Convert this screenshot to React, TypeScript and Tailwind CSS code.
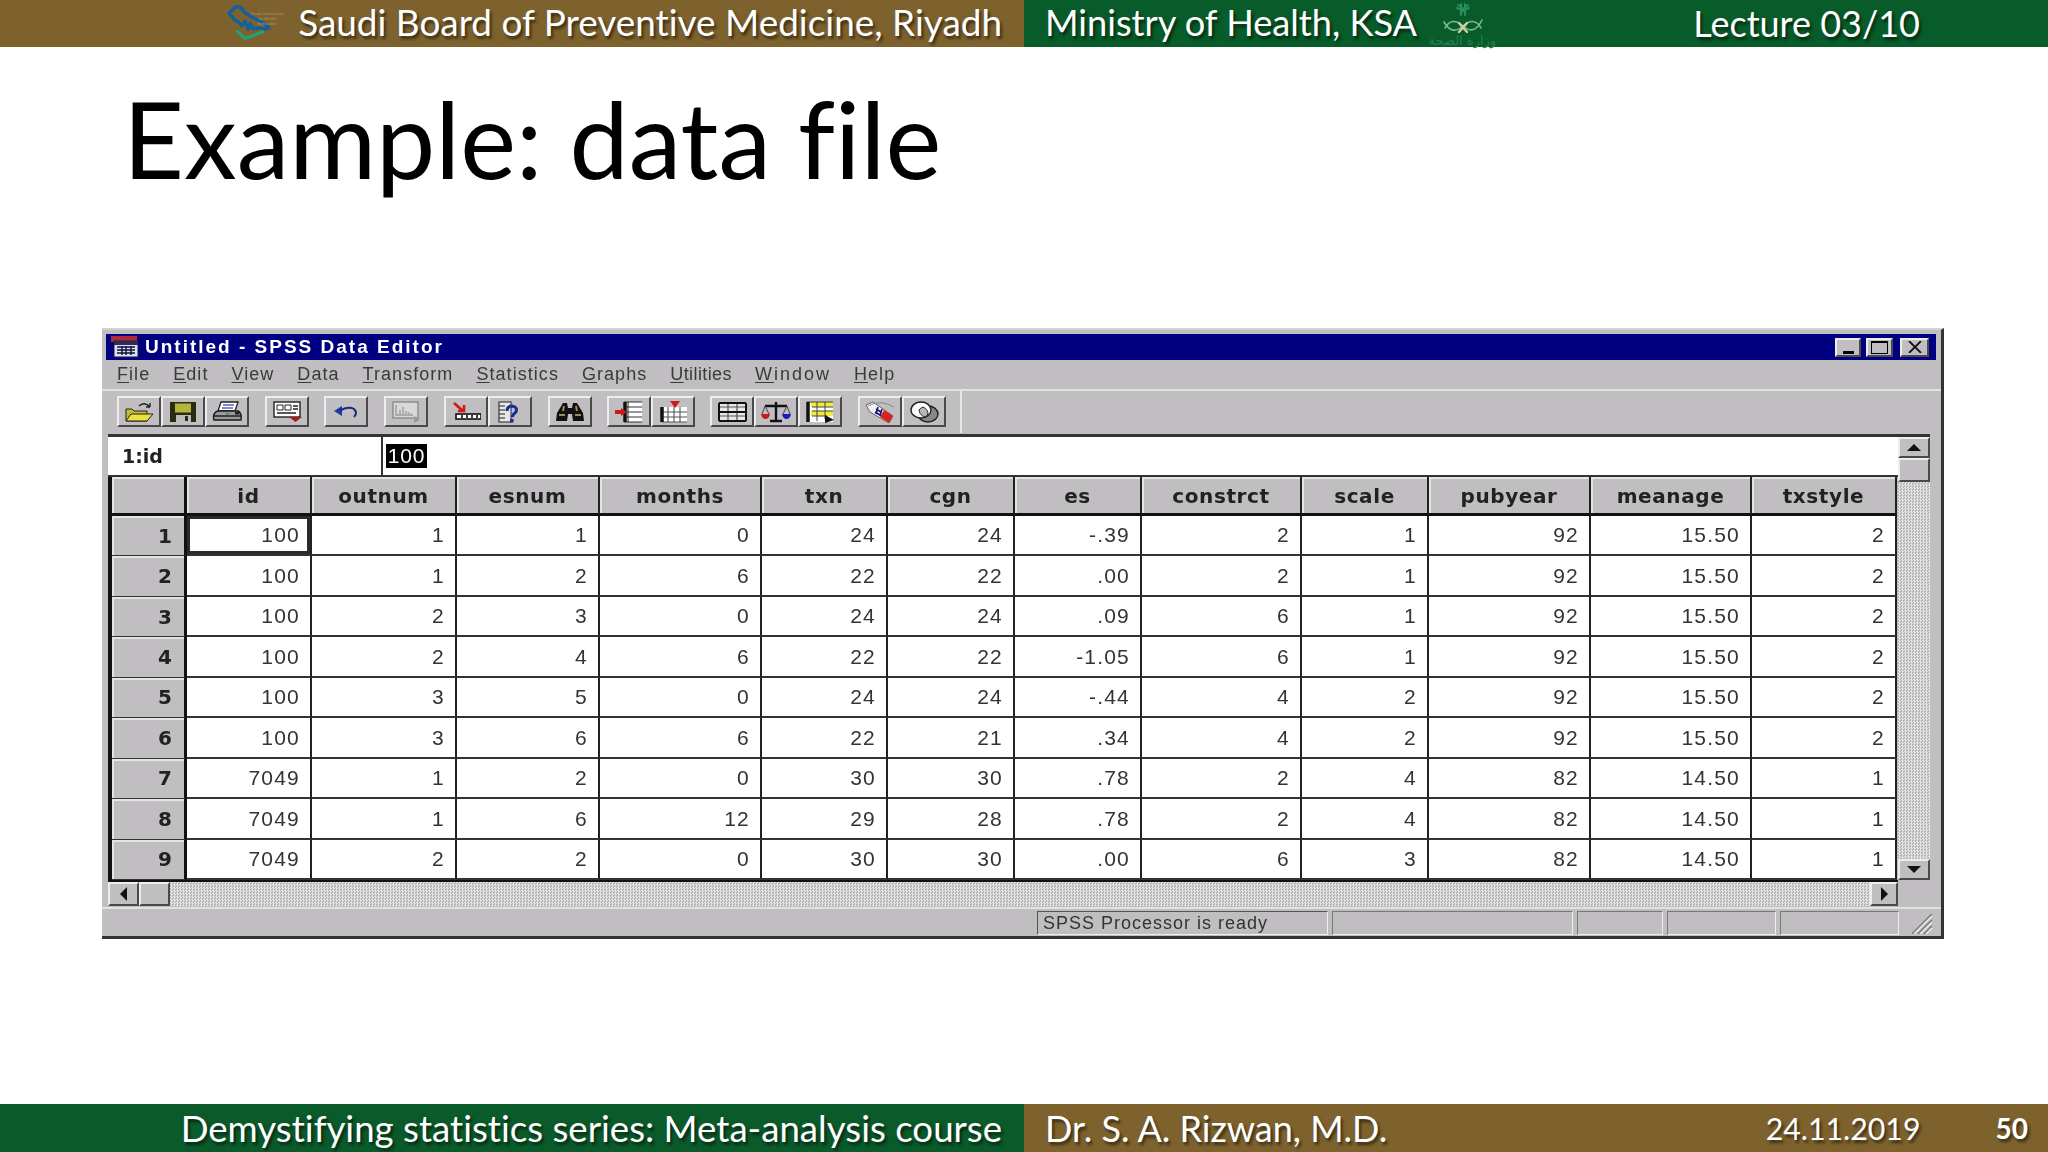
const raised = 'border-2 border-t-[#ededed] border-l-[#ededed] border-r-[#4a4a4a] border-b-[#4a4a4a] bg-[#c0bec1]';
const dither = 'bg-[repeating-conic-gradient(#e4e4e4_0%_25%,#b4b4b4_0%_50%)] bg-[length:3px_3px]';
const barText = "font-['Lato',sans-serif] leading-none text-white [font-variant-ligatures:none] [text-shadow:2px_3px_3px_rgba(0,0,0,0.55)] whitespace-nowrap";

const columns = ['id', 'outnum', 'esnum', 'months', 'txn', 'cgn', 'es', 'constrct', 'scale', 'pubyear', 'meanage', 'txstyle'];

const rows = [
  ['100', '1', '1', '0', '24', '24', '-.39', '2', '1', '92', '15.50', '2'],
  ['100', '1', '2', '6', '22', '22', '.00', '2', '1', '92', '15.50', '2'],
  ['100', '2', '3', '0', '24', '24', '.09', '6', '1', '92', '15.50', '2'],
  ['100', '2', '4', '6', '22', '22', '-1.05', '6', '1', '92', '15.50', '2'],
  ['100', '3', '5', '0', '24', '24', '-.44', '4', '2', '92', '15.50', '2'],
  ['100', '3', '6', '6', '22', '21', '.34', '4', '2', '92', '15.50', '2'],
  ['7049', '1', '2', '0', '30', '30', '.78', '2', '4', '82', '14.50', '1'],
  ['7049', '1', '6', '12', '29', '28', '.78', '2', '4', '82', '14.50', '1'],
  ['7049', '2', '2', '0', '30', '30', '.00', '6', '3', '82', '14.50', '1'],
];

const menus = [
  { label: 'File', tracking: '' },
  { label: 'Edit', tracking: '' },
  { label: 'View', tracking: '' },
  { label: 'Data', tracking: '' },
  { label: 'Transform', tracking: '' },
  { label: 'Statistics', tracking: '' },
  { label: 'Graphs', tracking: '' },
  { label: 'Utilities', tracking: 'tracking-[0.4px]' },
  { label: 'Window', tracking: 'tracking-[2px]' },
  { label: 'Help', tracking: '' },
];

function BoardLogo() {
  return (
    <div className="relative h-[37px] w-[47px] shrink-0">
      <svg viewBox="80 20 140 112" className="h-[37px] w-[47px]" fill="none" strokeLinecap="round" strokeLinejoin="round">
        <path d="M88 47 L108 29 Q125 25 135 46 Q150 56 170 66 Q200 80 209 92 Q200 100 180 92 L160 95 L152 78 L146 96 L136 72 L126 86 L118 76 L105 68 Z" stroke="#12609f" strokeWidth="10" />
        <path d="M114 103 L136 125 L190 104" stroke="#1fa37a" strokeWidth="9" />
      </svg>
      <div className="absolute left-[23px] top-[7px] w-[36px] text-center font-['Liberation_Sans',sans-serif] text-[4px] leading-[5px] text-[#a8966f]">
        Saudi Commission
        <br />
        for Health
        <br />
        Specialties
      </div>
    </div>
  );
}

function MinistryLogo() {
  return (
    <div className="relative ml-[13px] mt-[2px] h-[47px] w-[66px] shrink-0">
      <svg viewBox="0 0 66 36" className="h-[36px] w-[66px]" fill="none" strokeLinecap="round">
        <path d="M31 4 L31 15 M35 4 L35 15 M28 5 L33 9 L38 5 M27 8 L33 11 L39 8" stroke="#26905a" strokeWidth="2" />
        <path d="M15 28 Q22 16 33 26 Q44 36 52 20 M51 28 Q44 16 33 26 Q22 36 14 22" stroke="#7fb892" strokeWidth="1.6" />
        <path d="M29 23 L37 32 M37 23 L29 32" stroke="#cfcda6" strokeWidth="2.4" />
      </svg>
      <div dir="rtl" className="absolute left-0 top-[33px] w-[66px] whitespace-nowrap text-center font-['DejaVu_Sans',sans-serif] text-[13px] leading-[16px] text-[#237f4e]">
        وزارة الصحة
      </div>
    </div>
  );
}

function TitleIcon() {
  return (
    <svg viewBox="0 0 28 22" className="h-[22px] w-[28px] shrink-0">
      <rect x="0" y="0" width="26" height="6" fill="#b02a3a" />
      <rect x="3" y="5" width="24" height="16" fill="#dfe3ea" stroke="#1a1a3a" />
      <rect x="3" y="5" width="24" height="4" fill="#2b2b5c" />
      <path d="M6 11 H24 M6 14 H24 M6 17 H24 M11 10 V19 M15 10 V19 M20 10 V19" stroke="#101040" strokeWidth="1.4" />
    </svg>
  );
}

function ToolIcon({ name }: { name: string }) {
  return (
    <svg viewBox="0 0 30 22" className="h-[22px] w-[30px]" fill="none">
      {name === 'open' && (
        <>
          <path d="M2 8 L2 20 L23 20 L23 10 L10 10 L8 8 Z" fill="#c4b93a" stroke="#222" />
          <path d="M2 20 L7 13 L29 13 L23 20 Z" fill="#eae23e" stroke="#222" />
          <path d="M15 5 Q21 0 26 6 M26 6 L26 2 M26 6 L22 6" stroke="#222" strokeWidth="1.4" />
        </>
      )}
      {name === 'save' && (
        <>
          <rect x="2" y="1" width="26" height="20" fill="#2a2c12" />
          <rect x="7" y="2.500" width="16" height="9" fill="#b4b53c" />
          <rect x="8" y="14" width="15" height="7" fill="#bdbcbd" />
          <rect x="17" y="15" width="3" height="5" fill="#2a2c12" />
        </>
      )}
      {name === 'print' && (
        <>
          <path d="M9 1 L26 1 L23 10 L6 10 Z" fill="#fff" stroke="#222" strokeWidth="1.3" />
          <path d="M11 4 H22 M10 7 H21" stroke="#5566bb" strokeWidth="1.6" />
          <path d="M6 10 L26 10 Q30 12 29 19 L2 19 Q0 12 6 10 Z" fill="#9a9a9a" stroke="#1a1a1a" strokeWidth="1.4" />
          <path d="M2 15 H29" stroke="#1a1a1a" strokeWidth="1.4" />
          <rect x="23" y="11" width="4" height="2.500" fill="#222" />
          <rect x="14" y="12" width="3" height="1.500" fill="#3a9a4a" />
        </>
      )}
      {name === 'goto' && (
        <>
          <rect x="2" y="1" width="26" height="15" fill="#fff" stroke="#222" strokeWidth="1.4" />
          <path d="M5 4 H11 V9 H5 Z M13 4 H19 V9 H13 Z" stroke="#222" />
          <path d="M21 5 H26 M21 8 H26 M5 12 H24" stroke="#222" strokeWidth="1.4" />
          <path d="M17 16 H30 L23.500 21 Z" fill="#a51c1c" />
        </>
      )}
      {name === 'undo' && (
        <>
          <path d="M3 10 L11 5 L11 15 Z" fill="#1a3c9c" />
          <path d="M10 9 Q18 5 23 8 Q27 12 23 16" stroke="#1a2a7c" strokeWidth="2" />
        </>
      )}
      {name === 'chart' && (
        <>
          <rect x="2" y="1" width="25" height="16" fill="#d8d8d8" stroke="#8c8c8c" strokeWidth="1.4" />
          <path d="M5 4 V14 H22 M9 13 V9 M12 13 V6 M15 13 V10 M18 13 V11" stroke="#9a9a9a" strokeWidth="1.3" />
          <path d="M23 15 L29 19 L23 22 Z" fill="#9a9a9a" />
        </>
      )}
      {name === 'var' && (
        <>
          <path d="M3 2 L12 10 M7 10 L13 10 L13 4" stroke="#d01818" strokeWidth="2.6" />
          <rect x="5" y="13" width="25" height="5" fill="#fff" stroke="#111" strokeWidth="1.6" />
          <path d="M11 14 V17 M16 14 V17 M21 14 V17 M26 14 V17" stroke="#111" strokeWidth="1.6" />
        </>
      )}
      {name === 'help' && (
        <>
          <rect x="4" y="1" width="12" height="20" fill="#e6e6e6" stroke="#222" />
          <path d="M4 5 H10 M4 9 H10 M4 13 H10 M4 17 H10" stroke="#222" />
          <path d="M12 10 Q12 5 17 5 Q23 6 21 11 Q18 13 17 16" stroke="#1a2a9c" strokeWidth="3" />
          <rect x="15" y="18" width="3.500" height="3.500" fill="#1a2a9c" />
        </>
      )}
      {name === 'find' && (
        <>
          <path d="M8 2 L12 2 L13 7 L17 7 L18 2 L22 2 L28 12 L29 20 L18 20 L17 13 L13 13 L12 20 L1 20 L2 12 Z" fill="#111" />
          <path d="M4 14 L10 14 M20 14 L26 14 M9 5 L8 10 M21 5 L22 10" stroke="#a08c58" strokeWidth="2" />
        </>
      )}
      {name === 'insertCase' && (
        <>
          <path d="M10 1 H28 V21 H10 Z" fill="#fff" />
          <path d="M14 1 V21 M10 1 H28 M10 6 H28 M10 11 H28 M10 16 H28 M10 21 H28" stroke="#333" strokeWidth="1.1" />
          <path d="M11 1 V21" stroke="#111" strokeWidth="3.500" />
          <path d="M1 9 H7 V7 L13 11 L7 15 V13 H1 Z" fill="#d01818" />
        </>
      )}
      {name === 'insertVar' && (
        <>
          <path d="M4 6 H29 V21 H4 Z" fill="#fff" />
          <path d="M4 6 V21 M10 6 V21 M16 6 V21 M22 6 V21 M4 11 H29 M4 16 H29 M4 21 H29" stroke="#555" strokeWidth="1.1" />
          <path d="M4 6 V21" stroke="#111" strokeWidth="3.500" />
          <path d="M12 0 H22 L17 7 Z" fill="#d01818" />
        </>
      )}
      {name === 'split' && (
        <>
          <rect x="2" y="2" width="27" height="18" fill="#e8e8e8" />
          <path d="M2 6 H29 M2 15 H29 M11 2 V20 M20 2 V20" stroke="#555" strokeWidth="1.2" />
          <path d="M2 2 H29 M2 20 H29 M2 2 V20 M29 2 V20 M2 11 H29" stroke="#111" strokeWidth="2" />
        </>
      )}
      {name === 'weight' && (
        <>
          <path d="M15 1 V19 M9 20 H21 M4 5 H26" stroke="#111" strokeWidth="2.400" />
          <path d="M4 5 L1 13 M4 5 L8 13 M26 5 L22 13 M26 5 L29 13" stroke="#444" />
          <path d="M0 13 H9 Q8 18 4.500 18 Q1 18 0 13 Z" fill="#cc1818" />
          <path d="M21 13 H30 Q29 18 25.500 18 Q22 18 21 13 Z" fill="#1818cc" />
        </>
      )}
      {name === 'select' && (
        <>
          <rect x="2" y="1" width="26" height="20" fill="#fff" />
          <rect x="6" y="1" width="22" height="5" fill="#eeee33" />
          <rect x="6" y="10" width="22" height="5" fill="#eeee33" />
          <path d="M2 1 H28 M7 6 H28 M7 10 H28 M7 15 H22 M12 1 V20 M20 1 V18" stroke="#444" strokeWidth="1" />
          <path d="M3 1 V21" stroke="#111" strokeWidth="3.500" />
          <path d="M20 14 L29 19 L20 22 Z" fill="#111" />
        </>
      )}
      {name === 'label' && (
        <>
          <path d="M1 4 L8 1 L28 15 L24 22 L5 11 Z" fill="#f4f4f4" stroke="#666" />
          <path d="M24 22 L28 15 L19 9 L15 16 Z" fill="#d82222" />
          <path d="M11 8 L16 11 M10 11 L15 14 M13 6 L11 13 M17 8 L15 15" stroke="#16167c" strokeWidth="1.600" />
          <path d="M3 5 Q16 -2 29 6" stroke="#888" />
        </>
      )}
      {name === 'sets' && (
        <>
          <ellipse cx="19" cy="13" rx="10" ry="8" fill="#888" stroke="#222" strokeWidth="1.400" />
          <ellipse cx="12" cy="9" rx="10" ry="8" fill="#fff" stroke="#222" strokeWidth="1.400" />
          <path d="M14 6 A10 8 0 0 1 19 13 A10 8 0 0 1 16 16 A10 8 0 0 1 10 9 A10 8 0 0 1 14 6 Z" fill="#b8b8b8" stroke="#222" />
        </>
      )}
    </svg>
  );
}

function ToolGroup({ names, className }: { names: string[]; className?: string }) {
  return (
    <div className={`flex ${className ?? ''}`}>
      {names.map((name) => (
        <div key={name} className={`flex h-[31px] w-[44px] items-center justify-center ${raised}`}>
          <ToolIcon name={name} />
        </div>
      ))}
    </div>
  );
}

function Arrow({ dir }: { dir: 'up' | 'down' | 'left' | 'right' }) {
  const points = { up: '0,8 14,8 7,1', down: '0,1 14,1 7,8', left: '8,0 8,14 1,7', right: '1,0 1,14 8,7' }[dir];
  const box = dir === 'up' || dir === 'down' ? 'h-[9px] w-[14px]' : 'h-[14px] w-[9px]';
  const view = dir === 'up' || dir === 'down' ? '0 0 14 9' : '0 0 9 14';
  return (
    <svg viewBox={view} className={box}>
      <polygon points={points} fill="#111" />
    </svg>
  );
}

function DataEditor() {
  return (
    <div className="ml-[102px] flex h-[611px] w-[1842px] flex-col border-t-2 border-r-[3px] border-b-[3px] border-t-[#d2d2d2] border-r-[#333] border-b-[#333] bg-[#c0bec1] pt-[4px] blur-[0.5px]">
      <div className="ml-[4px] mr-[5px] flex h-[26px] shrink-0 items-center bg-[#000080] pl-[5px] pr-[7px]">
        <TitleIcon />
        <span className="ml-[6px] font-['Liberation_Sans',sans-serif] text-[19px] font-bold tracking-[2px] text-white">Untitled - SPSS Data Editor</span>
        <div className={`ml-auto flex h-[19px] w-[26px] items-end justify-center pb-[1px] ${raised}`}>
          <div className="h-[3px] w-[11px] bg-black" />
        </div>
        <div className={`ml-[5px] flex h-[19px] w-[27px] items-center justify-center ${raised}`}>
          <div className="h-[13px] w-[17px] border border-t-2 border-black" />
        </div>
        <div className={`ml-[7px] flex h-[19px] w-[29px] items-center justify-center ${raised}`}>
          <svg viewBox="0 0 14 12" className="h-[12px] w-[14px]">
            <path d="M1 0 L13 12 M13 0 L1 12" stroke="#111" strokeWidth="1.8" />
          </svg>
        </div>
      </div>

      <div className="flex h-[31px] shrink-0 items-center gap-[23px] border-b-2 border-b-[#e2e2e2] pl-[15px] font-['Liberation_Sans',sans-serif] text-[18px] tracking-[1.05px] text-[#3a3a3a]">
        {menus.map((menu) => (
          <span key={menu.label} className={menu.tracking}>
            <u className="underline-offset-2">{menu.label[0]}</u>
            {menu.label.slice(1)}
          </span>
        ))}
      </div>

      <div className="flex h-[43px] shrink-0 items-start pl-[15px] pt-[5px]">
        <ToolGroup names={['open', 'save', 'print']} />
        <ToolGroup names={['goto']} className="ml-[16px]" />
        <ToolGroup names={['undo']} className="ml-[15px]" />
        <ToolGroup names={['chart']} className="ml-[16px]" />
        <ToolGroup names={['var', 'help']} className="ml-[16px]" />
        <ToolGroup names={['find']} className="ml-[16px]" />
        <ToolGroup names={['insertCase', 'insertVar']} className="ml-[15px]" />
        <ToolGroup names={['split', 'weight', 'select']} className="ml-[15px]" />
        <ToolGroup names={['label', 'sets']} className="ml-[16px]" />
        <div className="ml-[14px] -mt-[5px] h-[42px] w-[2px] bg-[#e6e6e6]" />
      </div>

      <div className="ml-[6px] flex h-[472px] w-[1822px] shrink-0 flex-col border-t-[3px] border-t-[#333]">
        <div className="flex min-h-0 flex-1">
          <div className="flex w-[1790px] flex-col">
            <div className="flex h-[40px] shrink-0 border-b-2 border-b-[#333] bg-white">
              <div className="flex w-[275px] items-center border-r-2 border-r-[#333] pl-[14px] font-['DejaVu_Sans',sans-serif] text-[19px] font-bold text-[#222]">1:id</div>
              <div className="ml-[3px] flex h-[24px] w-[41px] items-center justify-center self-center bg-black font-['Liberation_Sans',sans-serif] text-[21px] tracking-[0.8px] text-white">100</div>
            </div>
            <div className="grid shrink-0 grid-cols-[75px_125px_145px_143px_162px_126px_127px_127px_160px_127px_162px_161px_145px] grid-rows-[39px_repeat(9,40.44px)] border-l-4 border-l-[#111] border-b-2 border-b-[#111] font-['Liberation_Sans',sans-serif] text-[21px] tracking-[1.2px] text-[#333]">
              <div className="border-r-[3px] border-b-[3px] border-r-[#111] border-b-[#111] bg-[#c0bec1] shadow-[inset_2px_2px_0_#e4e4e4]" />
              {columns.map((col) => (
                <div key={col} className="flex items-center justify-center border-r-2 border-b-[3px] border-r-[#222] border-b-[#111] bg-[#c0bec1] pt-[2px] font-['DejaVu_Sans',sans-serif] text-[20px] font-bold tracking-[0.6px] text-[#222] shadow-[inset_2px_2px_0_#e4e4e4]">
                  {col}
                </div>
              ))}
              {rows.map((row, r) => (
                <div key={r} className="contents">
                  <div className="flex items-center justify-end border-r-[3px] border-b border-r-[#111] border-b-[#333] bg-[#c0bec1] pr-[12px] font-['DejaVu_Sans',sans-serif] text-[20px] font-bold tracking-normal text-[#222] shadow-[inset_2px_2px_0_#e4e4e4]">
                    {r + 1}
                  </div>
                  {row.map((value, c) => (
                    <div
                      key={c}
                      className={`flex items-center justify-end border-r-2 border-b-2 border-r-[#222] border-b-[#333] bg-white pr-[10px] ${r === 0 && c === 0 ? 'shadow-[inset_0_0_0_3px_#2a2a2a]' : ''}`}
                    >
                      {value}
                    </div>
                  ))}
                </div>
              ))}
            </div>
            <div className="flex h-[24px] shrink-0">
              <div className={`flex w-[31px] items-center justify-center ${raised}`}>
                <Arrow dir="left" />
              </div>
              <div className={`w-[31px] ${raised}`} />
              <div className={`flex-1 ${dither}`} />
              <div className={`flex w-[28px] items-center justify-center ${raised}`}>
                <Arrow dir="right" />
              </div>
            </div>
          </div>

          <div className="flex w-[32px] flex-col">
            <div className={`flex h-[21px] shrink-0 items-center justify-center ${raised}`}>
              <Arrow dir="up" />
            </div>
            <div className={`h-[24px] shrink-0 ${raised}`} />
            <div className={`flex-1 ${dither}`} />
            <div className={`flex h-[21px] shrink-0 items-center justify-center ${raised}`}>
              <Arrow dir="down" />
            </div>
            <div className="h-[26px] shrink-0" />
          </div>
        </div>
      </div>

      <div className="mt-[1px] flex h-[29px] shrink-0 items-start border-t-2 border-t-[#e2e2e2] pl-[935px] pt-[2px] font-['Liberation_Sans',sans-serif] text-[18px] tracking-[1px] text-[#333]">
        <div className="flex h-[24px] w-[291px] items-center border border-t-[#555] border-l-[#555] border-r-[#eee] border-b-[#eee] pl-[5px]">SPSS Processor is ready</div>
        <div className="ml-[4px] h-[24px] w-[241px] border border-t-[#777] border-l-[#777] border-r-[#eee] border-b-[#eee]" />
        <div className="ml-[4px] h-[24px] w-[86px] border border-t-[#777] border-l-[#777] border-r-[#eee] border-b-[#eee]" />
        <div className="ml-[4px] h-[24px] w-[109px] border border-t-[#777] border-l-[#777] border-r-[#eee] border-b-[#eee]" />
        <div className="ml-[4px] h-[24px] w-[119px] border border-t-[#777] border-l-[#777] border-r-[#eee] border-b-[#eee]" />
        <svg viewBox="0 0 22 22" className="ml-[11px] mt-[1px] h-[22px] w-[22px]">
          <path d="M2 22 L22 2 M8 22 L22 8 M14 22 L22 14" stroke="#777" strokeWidth="1.6" />
          <path d="M4 22 L22 4 M10 22 L22 10 M16 22 L22 16" stroke="#f0f0f0" strokeWidth="1.4" />
        </svg>
      </div>
    </div>
  );
}

export default function App() {
  return (
    <div className="flex h-[1152px] w-[2048px] flex-col overflow-hidden bg-white">
      <header className="flex h-[47px] shrink-0">
        <div className="flex w-[1024px] items-center justify-end gap-[25px] bg-[#7d622d] pb-[2px] pr-[22px]">
          <BoardLogo />
          <span className={`text-[36.9px] ${barText}`}>Saudi Board of Preventive Medicine, Riyadh</span>
        </div>
        <div className="flex w-[1024px] items-center bg-[#085c29] pb-[2px] pl-[21px] pr-[128px]">
          <span className={`text-[36.2px] ${barText}`}>Ministry of Health, KSA</span>
          <MinistryLogo />
          <span className={`ml-auto text-[36px] ${barText}`}>Lecture 03/10</span>
        </div>
      </header>

      <div className="flex h-[281px] shrink-0 items-start pl-[123px] pt-[37px]">
        <h1 className="font-['Lato',sans-serif] text-[105.7px] font-normal leading-[110px] text-black [font-variant-ligatures:none]">Example: data file</h1>
      </div>

      <DataEditor />

      <footer className="mt-auto flex h-[48px] shrink-0">
        <div className="flex w-[1024px] items-center justify-end bg-[#0b5a2a] pr-[22px]">
          <span className={`text-[36.65px] ${barText}`}>Demystifying statistics series: Meta-analysis course</span>
        </div>
        <div className="flex w-[1024px] items-center bg-[#7d622d] pl-[21px] pr-[20px]">
          <span className={`text-[36px] ${barText}`}>Dr. S. A. Rizwan, M.D.</span>
          <span className={`ml-auto text-[30.3px] ${barText}`}>24.11.2019</span>
          <span className={`ml-[75px] text-[28px] font-bold ${barText}`}>50</span>
        </div>
      </footer>
    </div>
  );
}
